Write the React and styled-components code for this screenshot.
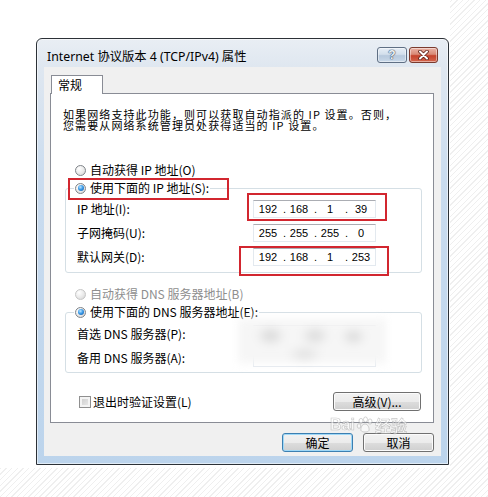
import React from 'react';
import styled, { createGlobalStyle } from 'styled-components';

const GlobalStyle = createGlobalStyle`
  html, body {
    margin: 0;
    padding: 0;
    background: #fff;
  }
  body {
    font-family: "Noto Sans CJK SC", "Noto Sans", sans-serif;
    color: #000;
  }
`;

const Stage = styled.div`
  width: 488px;
  height: 497px;
  overflow: hidden;
  background: repeating-linear-gradient(135deg, #fff 0 3px, #efefef 3px 4px);
`;

const Sheet = styled.div`
  width: 450px;
  height: 468px;
  box-sizing: border-box;
  padding: 38px 0 0 36px;
  background: #fff;
`;

const Window = styled.div`
  width: 413px;
  box-sizing: border-box;
  border: 1px solid #2c3137;
  border-radius: 6px 6px 0 0;
  padding: 0 7px 8px;
  display: flex;
  flex-direction: column;
  background: linear-gradient(#e9eef4 0, #dfe7f0 28px, #cadcef 140px, #bcd4ec 100%);
  box-shadow: inset 0 0 0 1px rgba(255, 255, 255, 0.55);
`;

const TitleBar = styled.div`
  height: 28px;
  box-sizing: border-box;
  padding: 8px 3px 0;
  display: flex;
  align-items: flex-start;
  justify-content: space-between;
`;

const Title = styled.div`
  font-family: "Noto Sans", "Noto Sans CJK SC", sans-serif;
  font-size: 12.3px;
  line-height: 20px;
  white-space: nowrap;
`;

const Caption = styled.div`
  display: flex;
  gap: 2px;
`;

const CaptionButton = styled.div`
  width: ${p => p.$w}px;
  height: 16px;
  box-sizing: border-box;
  border: 1px solid ${p => (p.$close ? '#7a3a2e' : '#5f6f84')};
  border-radius: 3px;
  display: flex;
  align-items: center;
  justify-content: center;
  background: ${p =>
    p.$close
      ? 'linear-gradient(#eab3a6 0%, #d98a76 45%, #c5432c 55%, #d4664d 100%)'
      : 'linear-gradient(#e7eef6 0%, #d3dfec 45%, #b7c9dd 55%, #c9d8e8 100%)'};
  box-shadow: inset 0 0 0 1px rgba(255, 255, 255, 0.45);
`;

const HelpMark = styled.span`
  font: bold 12px "Liberation Sans", sans-serif;
  line-height: 14px;
  color: #eef2f7;
  text-shadow: 0 0 1px #3d4e66, 0 0 1px #3d4e66, 0 0 1px #3d4e66;
`;

const Content = styled.div`
  position: relative;
  background: #f0f0f0;
  padding: 8px 7px 4px 6px;
  display: flex;
  flex-direction: column;
`;

const TabStrip = styled.div`
  display: flex;
  padding-left: 1px;
`;

const Tab = styled.div`
  position: relative;
  z-index: 1;
  width: 52px;
  height: 19px;
  box-sizing: border-box;
  margin-bottom: -1px;
  padding: 0 6px;
  border: 1px solid #898c95;
  border-bottom: none;
  background: #fff;
  font-size: 12px;
  line-height: 17px;
`;

const Panel = styled.div`
  border: 1px solid #898c95;
  background: #fff;
  padding: 0 11px 11px 12px;
  display: flex;
  flex-direction: column;
  font-size: 12px;
`;

const Description = styled.div`
  margin-top: 15px;
  font-size: 11px;
  letter-spacing: 1.1px;
  line-height: 11px;
  white-space: nowrap;
`;

const RadioRow = styled.div`
  display: flex;
  align-items: center;
  gap: 4px;
  height: 18px;
  margin-left: ${p => p.$indent || 0}px;
  margin-top: ${p => p.$top || 0}px;
  white-space: nowrap;
  line-height: 18px;
  color: ${p => (p.$disabled ? '#8e8e8e' : '#000')};
`;

const RadioDot = styled.span`
  position: relative;
  flex: none;
  width: 11px;
  height: 11px;
  box-sizing: border-box;
  border-radius: 50%;
  border: 1px solid ${p => (p.$disabled ? '#c6c6c6' : '#7f8489')};
  background: radial-gradient(circle at 35% 30%, #ffffff 0%, #e9e9e9 55%, #cfcfcf 100%);
  &::after {
    content: '';
    display: ${p => (p.$checked ? 'block' : 'none')};
    position: absolute;
    inset: 1.5px;
    border-radius: 50%;
    background: radial-gradient(circle at 40% 35%, #bfe6ff 0%, #3b9be8 45%, #14519d 100%);
  }
`;

const Group = styled.fieldset`
  margin: 0 0 0 2px;
  width: 357px;
  box-sizing: border-box;
  padding: ${p => p.$pad};
  border: 1px solid #d5dfe5;
  border-radius: 3px;
  min-width: 0;
`;

const Legend = styled.legend`
  position: relative;
  margin-left: 8px;
  padding: 0 1px;
`;

const FieldList = styled.div`
  position: relative;
  display: flex;
  flex-direction: column;
  gap: 6px;
`;

const FieldRow = styled.div`
  display: flex;
  align-items: center;
  height: 18px;
  padding-left: 11px;
`;

const Label = styled.span`
  width: 176px;
  flex: none;
  white-space: nowrap;
  line-height: 18px;
`;

const FieldWrap = styled.div`
  position: relative;
`;

const Field = styled.div`
  width: 123px;
  height: 18px;
  box-sizing: border-box;
  padding-left: 2px;
  border: 1px solid #e3e9ef;
  border-top-color: #abadb3;
  display: flex;
  align-items: center;
  background: #fff;
  font: 11px "Liberation Sans", sans-serif;
  line-height: 16px;
`;

const Octet = styled.span`
  width: 24px;
  text-align: center;
`;

const Dot = styled.span`
  width: 7px;
  text-align: right;
  padding-right: 1px;
  box-sizing: border-box;
`;

const Mark = styled.div`
  position: absolute;
  top: ${p => p.$t}px;
  left: ${p => p.$l}px;
  right: ${p => p.$r}px;
  bottom: ${p => p.$b}px;
  border: 2px solid #d2262f;
  pointer-events: none;
`;

const Smudge = styled.div`
  position: absolute;
  left: 172px;
  top: -6px;
  width: 148px;
  height: 44px;
  filter: blur(4px);
  background:
    radial-gradient(ellipse 15px 10px at 22% 38%, #d2d2d2, transparent),
    radial-gradient(ellipse 15px 10px at 52% 38%, #d5d5d5, transparent),
    radial-gradient(ellipse 13px 9px at 78% 40%, #d4d4d4, transparent),
    radial-gradient(ellipse 18px 9px at 45% 80%, #dedede, transparent),
    #f6f6f6;
`;

const Footer = styled.div`
  display: flex;
  align-items: center;
  justify-content: space-between;
  margin-top: 19px;
  padding: 0 1px 0 16px;
`;

const Check = styled.label`
  display: flex;
  align-items: center;
  gap: 2px;
  white-space: nowrap;
`;

const CheckBox = styled.span`
  width: 12px;
  height: 12px;
  box-sizing: border-box;
  border: 1px solid #8f8f8f;
  background: linear-gradient(135deg, #c9c9c9, #eeeeee);
  box-shadow: inset 0 0 0 2px #f4f4f4;
`;

const Button = styled.button`
  width: ${p => p.$w}px;
  height: 19px;
  box-sizing: border-box;
  padding: 0;
  border: 1px solid ${p => (p.$primary ? '#3c7fb1' : '#707070')};
  border-radius: 3px;
  background: linear-gradient(#f2f2f2 0%, #ebebeb 50%, #dddddd 51%, #cfcfcf 100%);
  box-shadow: inset 0 0 0 1px ${p => (p.$primary ? '#9fd8f7' : '#fbfbfb')};
  font: 12px "Noto Sans CJK SC", sans-serif;
  line-height: 17px;
  color: #000;
`;

const ButtonRow = styled.div`
  display: flex;
  justify-content: flex-end;
  gap: 10px;
  margin-top: 10px;
`;

const Watermark = styled.div`
  position: absolute;
  left: 286px;
  top: 346px;
  display: flex;
  align-items: center;
  gap: 1px;
  opacity: 0.55;
  font: bold 16px "Liberation Sans", "Noto Sans CJK SC", sans-serif;
  color: #fff;
  -webkit-text-stroke: 0.6px #9a9a9a;
  pointer-events: none;
`;

const IpField = ({ parts }) => (
  <Field>
    {parts.map((part, i) => (
      <React.Fragment key={i}>
        {i > 0 && <Dot>.</Dot>}
        <Octet>{part}</Octet>
      </React.Fragment>
    ))}
  </Field>
);

const Radio = ({ checked, disabled, indent, top, children }) => (
  <RadioRow $disabled={disabled} $indent={indent} $top={top}>
    <RadioDot $checked={checked} $disabled={disabled} />
    <span>{children}</span>
  </RadioRow>
);

const CloseGlyph = () => (
  <svg width="13" height="10" viewBox="0 0 13 10">
    <path d="M3 1.5 L10 8.5 M10 1.5 L3 8.5" stroke="#5b1f16" strokeWidth="3.6" strokeLinecap="round" />
    <path d="M3 1.5 L10 8.5 M10 1.5 L3 8.5" stroke="#fff" strokeWidth="2" strokeLinecap="round" />
  </svg>
);

const Paw = () => (
  <svg width="18" height="18" viewBox="0 0 18 18" fill="#fff" stroke="#9a9a9a" strokeWidth="0.8">
    <ellipse cx="5" cy="5" rx="2" ry="2.6" />
    <ellipse cx="9.5" cy="3.5" rx="2" ry="2.6" />
    <ellipse cx="14" cy="5.5" rx="2" ry="2.6" />
    <ellipse cx="3" cy="10" rx="1.8" ry="2.3" />
    <path d="M9 8 C6 8 4.5 12 5 14.5 C6 16.5 12 16.5 13 14.5 C13.5 12 12 8 9 8 Z" />
  </svg>
);

export default function App() {
  return (
    <Stage>
      <GlobalStyle />
      <Sheet>
        <Window>
          <TitleBar>
            <Title>Internet 协议版本 4 (TCP/IPv4) 属性</Title>
            <Caption>
              <CaptionButton $w={30}>
                <HelpMark>?</HelpMark>
              </CaptionButton>
              <CaptionButton $w={29} $close>
                <CloseGlyph />
              </CaptionButton>
            </Caption>
          </TitleBar>
          <Content>
            <TabStrip>
              <Tab>常规</Tab>
            </TabStrip>
            <Panel>
              <Description>
                如果网络支持此功能，则可以获取自动指派的 IP 设置。否则，
                <br />
                您需要从网络系统管理员处获得适当的 IP 设置。
              </Description>

              <Radio indent={12} top={30}>自动获得 IP 地址(O)</Radio>
              <Group $pad="3px 0 6px 0">
                <Legend>
                  <Radio checked>使用下面的 IP 地址(S):</Radio>
                  <Mark $t={-1} $l={-6} $r={-19} $b={-3} />
                </Legend>
                <FieldList>
                  <FieldRow>
                    <Label>IP 地址(I):</Label>
                    <FieldWrap>
                      <IpField parts={['192', '168', '1', '39']} />
                      <Mark $t={-7} $l={-6} $r={-11} $b={-3} />
                    </FieldWrap>
                  </FieldRow>
                  <FieldRow>
                    <Label>子网掩码(U):</Label>
                    <IpField parts={['255', '255', '255', '0']} />
                  </FieldRow>
                  <FieldRow>
                    <Label>默认网关(D):</Label>
                    <FieldWrap>
                      <IpField parts={['192', '168', '1', '253']} />
                      <Mark $t={-2} $l={-14} $r={-13} $b={-10} />
                    </FieldWrap>
                  </FieldRow>
                </FieldList>
              </Group>

              <Radio indent={12} top={12} disabled>自动获得 DNS 服务器地址(B)</Radio>
              <Group $pad="4px 0 5px 0">
                <Legend>
                  <Radio checked>使用下面的 DNS 服务器地址(E):</Radio>
                </Legend>
                <FieldList>
                  <FieldRow>
                    <Label>首选 DNS 服务器(P):</Label>
                    <Field />
                  </FieldRow>
                  <FieldRow>
                    <Label>备用 DNS 服务器(A):</Label>
                    <Field />
                  </FieldRow>
                  <Smudge />
                </FieldList>
              </Group>

              <Footer>
                <Check>
                  <CheckBox />
                  退出时验证设置(L)
                </Check>
                <Button $w={88}>高级(V)...</Button>
              </Footer>
            </Panel>
            <ButtonRow>
              <Button $w={71} $primary>确定</Button>
              <Button $w={71}>取消</Button>
            </ButtonRow>
            <Watermark>
              <span>Bai</span>
              <Paw />
              <span>经验</span>
            </Watermark>
          </Content>
        </Window>
      </Sheet>
    </Stage>
  );
}
